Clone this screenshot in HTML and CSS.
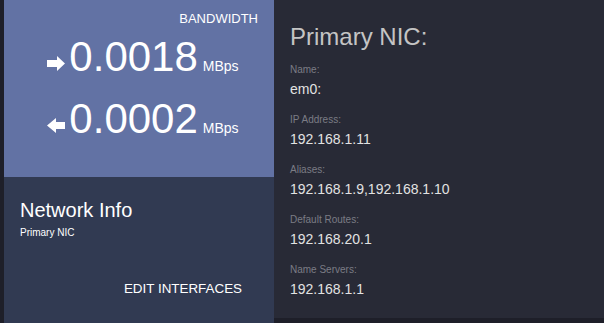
FILE: index.html
```html
<!DOCTYPE html>
<html lang="en">
<head>
    <meta charset="UTF-8">
    <meta name="viewport" content="width=device-width, initial-scale=1.0">
    <title>Network Info</title>
    <link rel="stylesheet" href="styles.css">
</head>
<body>
<div class="wrap">
    <div class="card">
        <div class="bandwidth">
            <div class="bw-title">BANDWIDTH</div>
            <div class="bw-row">
                <svg class="arrow" width="18" height="15" viewBox="0 0 18 15">
                    <path d="M0 4 H10 V0 L18 7.5 L10 15 V11 H0 Z" fill="#fff"/>
                </svg>
                <span class="bw-num">0.0018</span>
                <span class="bw-unit">MBps</span>
            </div>
            <div class="bw-row">
                <svg class="arrow" width="18" height="15" viewBox="0 0 18 15">
                    <path d="M18 4 H9 V0 L0 7.5 L9 15 V11 H18 Z" fill="#fff"/>
                </svg>
                <span class="bw-num">0.0002</span>
                <span class="bw-unit">MBps</span>
            </div>
        </div>
        <div class="card-info">
            <h2>Network Info</h2>
            <div class="sub">Primary NIC</div>
            <div class="actions">
                <a href="#" class="btn">EDIT INTERFACES</a>
            </div>
        </div>
    </div>

    <div class="details">
        <h1>Primary NIC:</h1>
        <div class="item">
            <div class="label">Name:</div>
            <div class="value">em0:</div>
        </div>
        <div class="item">
            <div class="label">IP Address:</div>
            <div class="value">192.168.1.11</div>
        </div>
        <div class="item">
            <div class="label">Aliases:</div>
            <div class="value">192.168.1.9,192.168.1.10</div>
        </div>
        <div class="item">
            <div class="label">Default Routes:</div>
            <div class="value">192.168.20.1</div>
        </div>
        <div class="item">
            <div class="label">Name Servers:</div>
            <div class="value">192.168.1.1</div>
        </div>
    </div>
</div>
</body>
</html>
```

FILE: styles.css
```css
body {
    margin: 0;
    font-family: "Liberation Sans", Arial, sans-serif;
    background-color: #1e1f29;
    color: white;
}
.wrap {
    display: flex;
    align-items: flex-start;
    padding-left: 4px;
    height: 323px;
    overflow: hidden;
}
.card {
    width: 270px;
    height: 323px;
    display: flex;
    flex-direction: column;
}
.bandwidth {
    background-color: #6272a4;
    height: 177px;
    box-sizing: border-box;
    padding-top: 11px;
}
.bw-title {
    font-size: 13px;
    line-height: 15px;
    text-align: right;
    padding-right: 16px;
}
.bw-row {
    display: flex;
    align-items: baseline;
    justify-content: center;
    padding-left: 8px;
    height: 62px;
    line-height: 62px;
}
.arrow {
    margin-bottom: 2px;
    margin-right: 4px;
}
.bw-num {
    font-size: 42px;
}
.bw-unit {
    font-size: 14px;
    margin-left: 5px;
}
.card-info {
    flex: 1;
    background-color: #313a52;
    padding: 21px 16px 0 16px;
}
.card-info h2 {
    margin: 0;
    font-size: 20px;
    line-height: 24px;
    font-weight: normal;
}
.sub {
    margin-top: 4px;
    font-size: 10px;
    line-height: 14px;
}
.actions {
    display: flex;
    justify-content: flex-end;
    margin-top: 41px;
    padding-right: 16px;
}
.btn {
    color: white;
    text-decoration: none;
    font-size: 13.4px;
    line-height: 15px;
}
.details {
    width: 330px;
    height: 318px;
    box-sizing: border-box;
    background-color: #282a36;
    padding: 23px 16px 0 16px;
}
.details h1 {
    margin: 0 0 12px 0;
    font-size: 24px;
    line-height: 28px;
    font-weight: normal;
    color: #c4c4c4;
}
.item {
    margin-bottom: 12px;
}
.label {
    font-size: 10px;
    line-height: 14px;
    color: #7b7c85;
}
.value {
    font-size: 14px;
    line-height: 24px;
    color: #e2e2e2;
}
```
